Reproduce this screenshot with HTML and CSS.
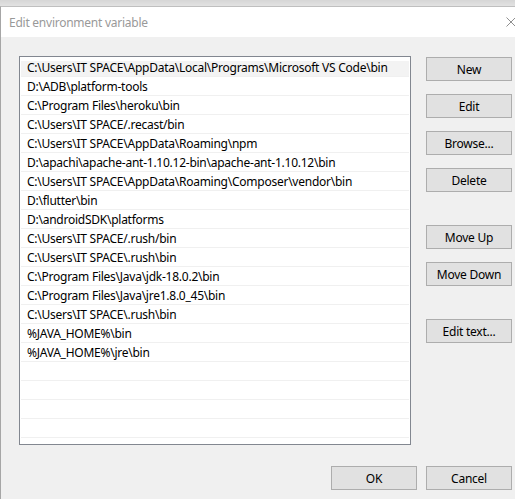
FILE: index.html
```html
<!DOCTYPE html>
<html>
<head>
<meta charset="utf-8">
<link rel="stylesheet" href="styles.css">
</head>
<body>
<div class="backdrop"></div>
<div class="window">
  <div class="titlebar">
    <span class="title">Edit environment variable</span>
    <svg class="close" width="10" height="10" viewBox="0 0 10 10"><path d="M0.5 0.5 L9.5 9.5 M9.5 0.5 L0.5 9.5" stroke="#8f8f8f" stroke-width="1" fill="none"/></svg>
  </div>
  <div class="content">
    <div class="main">
      <div class="list">
        <div class="row active">C:\Users\IT SPACE\AppData\Local\Programs\Microsoft VS Code\bin</div>
        <div class="row">D:\ADB\platform-tools</div>
        <div class="row">C:\Program Files\heroku\bin</div>
        <div class="row">C:\Users\IT SPACE/.recast/bin</div>
        <div class="row">C:\Users\IT SPACE\AppData\Roaming\npm</div>
        <div class="row">D:\apachi\apache-ant-1.10.12-bin\apache-ant-1.10.12\bin</div>
        <div class="row">C:\Users\IT SPACE\AppData\Roaming\Composer\vendor\bin</div>
        <div class="row">D:\flutter\bin</div>
        <div class="row">D:\androidSDK\platforms</div>
        <div class="row">C:\Users\IT SPACE/.rush/bin</div>
        <div class="row">C:\Users\IT SPACE\.rush\bin</div>
        <div class="row">C:\Program Files\Java\jdk-18.0.2\bin</div>
        <div class="row">C:\Program Files\Java\jre1.8.0_45\bin</div>
        <div class="row">C:\Users\IT SPACE\.rush\bin</div>
        <div class="row">%JAVA_HOME%\bin</div>
        <div class="row">%JAVA_HOME%\jre\bin</div>
        <div class="row"></div>
        <div class="row"></div>
        <div class="row"></div>
        <div class="row"></div>
        <div class="row"></div>
      </div>
      <div class="buttons">
        <button class="btn">New</button>
        <button class="btn">Edit</button>
        <button class="btn">Browse...</button>
        <button class="btn">Delete</button>
        <button class="btn spaced">Move Up</button>
        <button class="btn">Move Down</button>
        <button class="btn spaced">Edit text...</button>
      </div>
    </div>
    <div class="footer">
      <button class="btn">OK</button>
      <button class="btn">Cancel</button>
    </div>
  </div>
</div>
</body>
</html>
```
FILE: styles.css
```css
html, body {
  margin: 0;
  padding: 0;
  width: 515px;
  height: 499px;
  overflow: hidden;
  background: #f0f0f0;
  font-family: "Noto Sans", "Open Sans", sans-serif;
  font-size: 12px;
  letter-spacing: -0.25px;
  color: #000;
}

.backdrop {
  height: 6px;
  background: linear-gradient(#d6d6d6, #e2e2e2);
}

.window {
  border-top: 1px solid #bfbfbf;
  border-left: 1px solid #a6a6a6;
  height: 492px;
  background: #f0f0f0;
}

.titlebar {
  height: 30px;
  background: #fff;
  display: flex;
  align-items: center;
  justify-content: space-between;
  padding-left: 8px;
  box-sizing: border-box;
}

.title {
  color: #999;
  font-size: 12px;
}

.close {
  margin-right: -1px;
  flex: none;
}

.content {
  padding: 19px 3px 0 18px;
}

.main {
  display: flex;
  gap: 15px;
}

.list {
  width: 392px;
  height: 389px;
  box-sizing: border-box;
  border: 1px solid #828790;
  background: #fff;
  padding: 1px 1px 0;
  overflow: hidden;
}

.row {
  height: 17px;
  padding-top: 1px;
  line-height: 18px;
  border-bottom: 1px solid #f0f0f0;
  padding-left: 6px;
  white-space: nowrap;
}

.row.active {
  background: linear-gradient(#fff 3px, #f3f3f3 3px);
}

.buttons {
  display: flex;
  flex-direction: column;
  gap: 13px;
  padding-top: 1px;
}

.btn {
  width: 86px;
  height: 24px;
  box-sizing: border-box;
  background: #e1e1e1;
  border: 1px solid #adadad;
  font-family: inherit;
  font-size: 12px;
  letter-spacing: -0.25px;
  color: #000;
  padding: 0;
  margin: 0;
}

.btn.spaced {
  margin-top: 20px;
}

.footer {
  display: flex;
  justify-content: flex-end;
  gap: 9px;
  margin-top: 21px;
}
```
